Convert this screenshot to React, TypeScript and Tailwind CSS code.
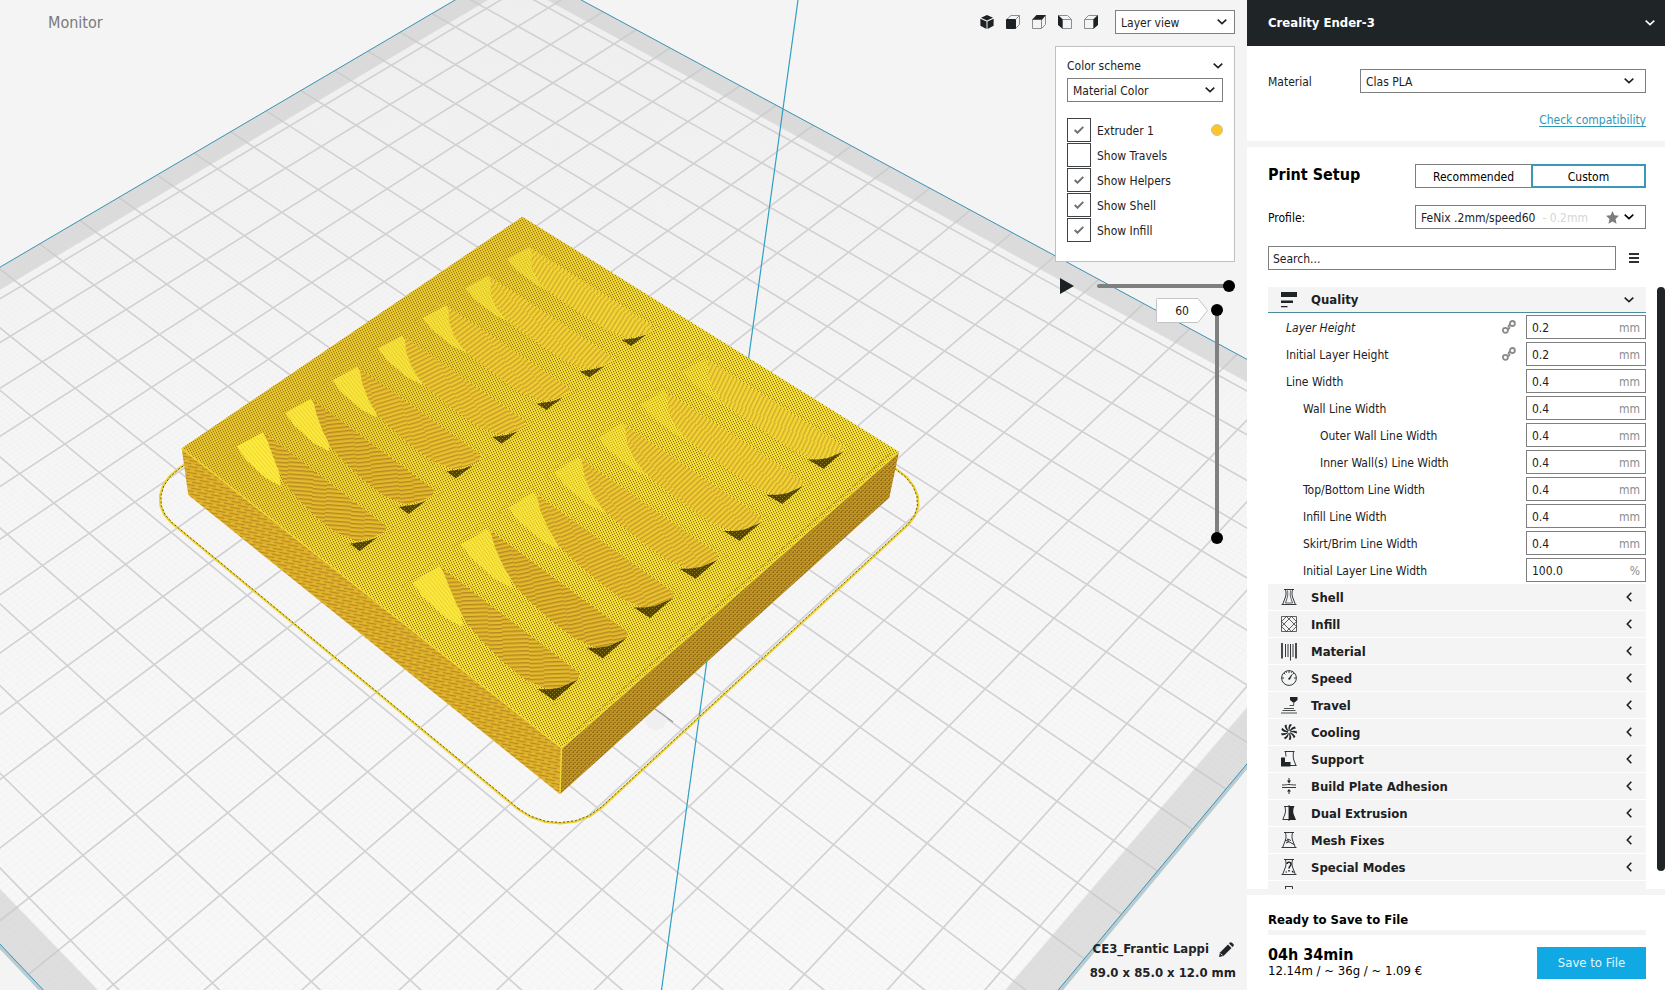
import React, { useState } from 'react';

/* ---------- projection helpers for the 3D scene ---------- */

type Matrix = readonly [number, number, number, number, number, number, number, number];

// Build plate plane, one unit = 10 mm, origin in the rear corner.
const PLATE: Matrix = [-35.03111, 25.51258, 515.4932, 17.69392, 17.063, -35.46457, -0.01075249, -0.01048606];
// Top face of the sliced model as a unit square.
const TOP: Matrix = [-360.0557, 277.0483, 522.3, 183.598, 184.9303, 216.7, -0.1070757, -0.1108472];

const PLATE_SIZE = 23.5;
const BORDER = 0.54;

function project(m: Matrix, u: number, v: number): string {
  const w = m[6] * u + m[7] * v + 1;
  const x = (m[0] * u + m[1] * v + m[2]) / w;
  const y = (m[3] * u + m[4] * v + m[5]) / w;
  return `${x.toFixed(1)} ${y.toFixed(1)}`;
}

function shape(m: Matrix, points: number[][]): string {
  return 'M' + points.map(([u, v]) => project(m, u, v)).join('L') + 'Z';
}

function gridPath(positions: number[]): string {
  return positions
    .map(
      (p) =>
        `M${project(PLATE, p, 0)}L${project(PLATE, p, PLATE_SIZE)}` +
        `M${project(PLATE, 0, p)}L${project(PLATE, PLATE_SIZE, p)}`,
    )
    .join('');
}

const majorLines = Array.from({ length: 23 }, (_, i) => 0.75 + i);
const minorLines = Array.from({ length: 234 }, (_, i) => 0.05 + i * 0.1);

const rect = (a: number, b: number) => [
  [a, a],
  [b, a],
  [b, b],
  [a, b],
];

function skirtPoints(grow: number): number[][] {
  const [u0, u1, v0, v1, r] = [6.85 - grow, 16.6 + grow, 6.7 - grow, 16.79 + grow, 0.9];
  const corners = [
    [u1 - r, v1 - r, 0],
    [u0 + r, v1 - r, 90],
    [u0 + r, v0 + r, 180],
    [u1 - r, v0 + r, 270],
  ];
  return corners.flatMap(([cu, cv, start]) =>
    [0, 15, 30, 45, 60, 75, 90].map((step) => {
      const angle = ((start + step) * Math.PI) / 180;
      return [cu + r * Math.cos(angle), cv + r * Math.sin(angle)];
    }),
  );
}

interface Slot {
  id: string;
  angle: number;
  wall: string;
  stripe: string;
  glow: number;
  outer: string;
  facet: string;
  body: string;
  dark: string;
}

const WALLS = ['#f3d835', '#f2d434', '#f0cf32', '#edca30', '#e9c22e', '#e4ba2c', '#e4bb2c'];
const STRIPES = ['#d3ab2b', '#d0a72a', '#cca129', '#c79b27', '#c09324', '#b68921', '#b68921'];

const slots: Slot[] = [0, 1].flatMap((column) =>
  Array.from({ length: 7 }, (_, i) => {
    const k = i / 6;
    const far = 1 - k;
    const p0 = 0.062 + i * 0.1318;
    const q0 = column === 0 ? 0.073 : 0.56;
    const at = ([s, t]: number[]) => [p0 + 0.083 * t, q0 + 0.363 * s];
    return {
      id: `slot-${column}-${i}`,
      angle: -58 + 62 * k - column * 6,
      wall: WALLS[i],
      stripe: STRIPES[i],
      glow: column === 0 ? 0.6 + 0.4 * k : 0.3 + 0.6 * k,
      outer: shape(TOP, [[-0.02, -0.05], [1.02, -0.05], [1.02, 1.05], [-0.02, 1.05]].map(at)),
      facet: shape(TOP, [[0.02, 0.04], [0, 0.8], [0.1, 0.93], [0.28, 1], [0.38, 0.92], [0.26, 0.5], [0.12, 0.2]].map(at)),
      body: shape(
        TOP,
        [
          [0.04, 0.03],
          [0.98, 0.04],
          [1, 0.2],
          [0.98, 0.55],
          [0.94, 0.84],
          [0.82, 1],
          [0.66, 0.99 + 0.01 * far],
          [0.5 - 0.08 * far, 0.9 + 0.08 * far],
          [0.38 - 0.08 * far, 0.78 + 0.14 * far],
          [0.26 - 0.05 * far, 0.56 + 0.2 * far],
          [0.13, 0.26 + 0.25 * far],
        ].map(at),
      ),
      dark:
        column === 0
          ? shape(TOP, [[0.93, 1], [0.95, 0.86], [0.975, 0.7], [1, 0.42], [1, 1]].map(at))
          : shape(TOP, [[0.9, 1], [0.94, 0.82], [0.97, 0.62], [1, 0.18], [1, 0.97]].map(at)),
    };
  }),
);

function Scene() {
  return (
    <svg
      className="absolute inset-0 size-full"
      viewBox="0 0 1247 990"
      preserveAspectRatio="xMinYMin slice"
      role="img"
      aria-label="Sliced model on the build plate"
    >
      <defs>
        <linearGradient id="plate" x1="0" y1="0" x2="0" y2="1">
          <stop offset="0" stopColor="#efefef" />
          <stop offset="0.3" stopColor="#f6f6f6" />
          <stop offset="1" stopColor="#fafafa" />
        </linearGradient>
        <pattern id="top" width="5" height="5" patternUnits="userSpaceOnUse">
          <rect width="5" height="5" fill="#f7e132" />
          <path
            d="M0 1h1v1H0zM1 3h1v1H1zM2 0h1v1H2zM3 2h1v1H3zM4 4h1v1H4z"
            fill="#e4c42d"
            shapeRendering="crispEdges"
          />
          <path
            d="M0 0h1v1H0zM1 2h1v1H1zM2 4h1v1H2zM3 1h1v1H3zM4 3h1v1H4z"
            fill="#85701c"
            shapeRendering="crispEdges"
          />
        </pattern>
        <pattern id="bright" width="4" height="3" patternUnits="userSpaceOnUse" patternTransform="rotate(50)">
          <rect width="4" height="3" fill="#ffec3c" />
          <path d="M0 0h4v1H0z" fill="#ecd636" />
        </pattern>
        <pattern id="left" width="14" height="6" patternUnits="userSpaceOnUse" patternTransform="rotate(10)">
          <rect width="14" height="6" fill="#dcae2a" />
          <path d="M0 0h10v1H0zM7 3h7v1H7zM0 3h3v1H0z" fill="#b78a20" />
          <path d="M10 1h4v1H10zM3 4h4v1H3z" fill="#e6bc2e" />
        </pattern>
        <pattern id="right" width="4" height="4" patternUnits="userSpaceOnUse">
          <rect width="4" height="4" fill="#c0941f" />
          <path d="M0 0h2v1H0zM2 2h2v1H2zM1 3h1v1H1z" fill="#967019" shapeRendering="crispEdges" />
        </pattern>
        <pattern id="shadow" width="4" height="4" patternUnits="userSpaceOnUse">
          <rect width="4" height="4" fill="#51450f" />
          <path d="M0 0h1v1H0zM2 2h1v1H2z" fill="#8f7a1d" />
        </pattern>
        <linearGradient id="tint" gradientUnits="userSpaceOnUse" x1="250" y1="370" x2="420" y2="560">
          <stop offset="0" stopColor="#c48f1c" stopOpacity="0.38" />
          <stop offset="1" stopColor="#c48f1c" stopOpacity="0" />
        </linearGradient>
        {slots.map((s) => (
          <pattern
            key={s.id}
            id={s.id}
            width="40"
            height="4"
            patternUnits="userSpaceOnUse"
            patternTransform={`rotate(${s.angle.toFixed(0)})`}
          >
            <rect width="40" height="4" fill={s.wall} />
            <path d="M0 0h26v1.500H0zM26 1h14v1.500H26z" fill={s.stripe} />
          </pattern>
        ))}
      </defs>

      {/* build plate */}
      <path d={shape(PLATE, rect(0, PLATE_SIZE + 0.05))} fill="#b9ccd1" />
      <path d={shape(PLATE, rect(0, PLATE_SIZE))} fill="url(#plate)" />
      <path d={gridPath(minorLines)} stroke="#ececee" strokeOpacity="0.55" strokeWidth="0.7" fill="none" />
      <path d={gridPath(majorLines)} stroke="#d2d2d5" strokeWidth="1.7" fill="none" />
      <path
        d={shape(PLATE, rect(0, PLATE_SIZE)) + shape(PLATE, rect(BORDER, PLATE_SIZE - BORDER))}
        fill="#c9c9c9"
        fillOpacity="0.56"
        fillRule="evenodd"
      />
      <path d={shape(PLATE, rect(0, PLATE_SIZE))} fill="none" stroke="#3a93b5" strokeWidth="1" />
      <path d="M798 0L661.500 990" stroke="#2f9fc4" strokeWidth="1.2" />

      {/* origin marker */}
      <circle cx="656" cy="719" r="11" fill="#efeff1" />
      <path d="M655 709l18 13" stroke="#9a9a9e" strokeWidth="1.3" />

      {/* skirt */}
      <path d={shape(PLATE, skirtPoints(0.01))} fill="none" stroke="#ecd23a" strokeWidth="2.4" />
      <path d={shape(PLATE, skirtPoints(0))} fill="none" stroke="#5f4d10" strokeWidth="0.9" strokeDasharray="2 2" />

      {/* model */}
      <path d="M181.700 448.300L561.700 748.300L560 794.300L188.300 495Z" fill="url(#left)" />
      <path d="M899 451.700L561.700 748.300L560 794.300L889.300 497.700Z" fill="url(#right)" />
      <path d={shape(TOP, rect(0, 1))} fill="url(#top)" />
      <path d={shape(TOP, rect(0, 1))} fill="url(#tint)" />
      <path d="M181.700 448.300L561.700 748.300L899 451.700" fill="none" stroke="#f0da38" strokeWidth="1.2" />
      <path d="M567 738L892 452" fill="none" stroke="#c49c25" strokeWidth="1" />
      <path d="M561.500 748L560 794" stroke="#f0d636" strokeWidth="1.5" />
      {slots.map((s) => (
        <g key={s.id}>
          <path d={s.outer} fill="none" stroke="#caa52a" strokeOpacity="0.5" strokeDasharray="2 1" strokeWidth="1" />
          <path d={s.facet} fill="url(#bright)" fillOpacity={s.glow} />
          <path d={s.body} fill={`url(#${s.id})`} />
          <path d={s.dark} fill="url(#shadow)" />
        </g>
      ))}
    </svg>
  );
}

/* ---------- small drawings ---------- */

function Chevron({ className = '' }: { className?: string }) {
  return (
    <svg className={`h-[6px] w-[10px] ${className}`} viewBox="0 0 10 6" fill="none" stroke="currentColor" strokeWidth="1.6" aria-hidden>
      <path d="M.7 .7L5 4.700L9.300 .7" />
    </svg>
  );
}

function ChevronLeft() {
  return (
    <svg className="h-[10px] w-[6px]" viewBox="0 0 6 10" fill="none" stroke="currentColor" strokeWidth="1.6" aria-hidden>
      <path d="M5.300 .7L1.300 5L5.300 9.300" />
    </svg>
  );
}

const VIEW_ICONS: { label: string; art: React.ReactNode }[] = [
  {
    label: '3D View',
    art: (
      <g fill="#1c2123">
        <path d="M7 0L13 2.700L7 5.500L1 2.700Z" />
        <path d="M.4 3.700L6.500 6.600V14L.4 10.800Z" />
        <path d="M13.600 3.700L7.500 6.600V14L13.600 10.800Z" />
      </g>
    ),
  },
  {
    label: 'Front View',
    art: (
      <g>
        <path d="M.5 4.500L5 .5H13.500V9.500L9.500 13.500M9.500 4.500L13.500 .5" fill="none" stroke="#8b8d8e" />
        <rect y="4" width="10" height="10" rx="1" fill="#1c2123" />
      </g>
    ),
  },
  {
    label: 'Top View',
    art: (
      <g>
        <path d="M.5 4.500V13.500H9.500V4.500M9.500 13.500L13.500 9.500V.5" fill="none" stroke="#8b8d8e" />
        <path d="M0 4.700L4.500 0H14L10 4.700Z" fill="#1c2123" />
      </g>
    ),
  },
  {
    label: 'Left View',
    art: (
      <g>
        <path d="M.5 .5H9.500L13.500 4.500V13.500H4.500M4.500 4.500H13.500" fill="none" stroke="#8b8d8e" />
        <path d="M0 0L4.700 4.200V14L0 10Z" fill="#1c2123" />
      </g>
    ),
  },
  {
    label: 'Right View',
    art: (
      <g>
        <path d="M9.500 13.500H.5V4.500L4.500 .5H13.500M.5 4.500H9.500" fill="none" stroke="#8b8d8e" />
        <path d="M14 0L9.300 4.200V14L14 10Z" fill="#1c2123" />
      </g>
    ),
  },
];

const VASE = 'M3 .5H13M4.500 .5C4.800 3 5.500 5 4.500 8L1.800 15M11.500 .5C11.200 3 10.500 5 11.500 8L14.200 15M.5 15.500H15.500';

const CATEGORY_ART: Record<string, React.ReactNode> = {
  Quality: <path d="M0 0H16V5H0ZM0 8.500H12V11H0ZM0 14H6.500V15.200H0Z" fill="#1f2426" stroke="none" />,
  Shell: (
    <g>
      <path d={VASE} />
      <path d="M6.500 1.500C6.800 4 7 6 6.300 8.500L4.500 14H11.500L9.700 8.500C9 6 9.200 4 9.500 1.500" strokeWidth=".7" />
    </g>
  ),
  Infill: (
    <path d="M.5 .5H15.500V15.500H.5ZM.5 5.500L5.500 .5M.5 10.500L10.500 .5M5.500 15.500L15.500 5.500M10.500 15.500L15.500 10.500M10.500 .5L15.500 5.500M5.500 .5L15.500 10.500M.5 5.500L10.500 15.500M.5 10.500L5.500 15.500" strokeWidth=".7" />
  ),
  Material: (
    <g>
      <path d="M1 0V15.500M15 0V15.500" strokeWidth="1.6" />
      <path d="M4.500 1V14M7 1V14M9.500 1V17.500M12 1V14" strokeWidth=".9" />
    </g>
  ),
  Speed: (
    <g>
      <circle cx="8" cy="8" r="7.400" />
      <path d="M8 1V3M3 3L4.300 4.300M13 3L11.700 4.300M1 8H3M13 8H15M5 1.500L5.500 2.800M11 1.500L10.500 2.800" strokeWidth=".9" />
      <path d="M7.300 9L11 4.500L8.700 9.500Z" fill="#1f2426" strokeWidth=".6" />
    </g>
  ),
  Travel: (
    <g>
      <path d="M9 0H16.500V3L13.500 5.500H12L9 3Z" fill="#1f2426" stroke="none" />
      <path d="M12.700 5.500V8.500H8.500M3 11.500H13M1.500 13.500H14.500M0 16H16" strokeWidth=".8" />
    </g>
  ),
  Cooling: (
    <g fill="#1f2426" stroke="none">
      {[0, 40, 80, 120, 160, 200, 240, 280, 320].map((a) => (
        <path key={a} d="M8 7C7 4.500 7.300 2 9 0L11 .8C9.300 2.500 8.500 4.500 8.600 7Z" transform={`rotate(${a} 8 8)`} />
      ))}
    </g>
  ),
  Support: (
    <g>
      <path d="M3.500 .5H13.500M4.500 .5L5 5.500M12.500 .5C12.200 4 12 6 12.800 9L15 14.500M9 14.500H15.500" strokeWidth=".9" />
      <path d="M0 6.500H4V11H9.500V15.500H0Z" fill="#1f2426" stroke="none" />
    </g>
  ),
  'Build Plate Adhesion': (
    <g>
      <path d="M1 7C5 7 6 6.500 8 6.500S11 7 15 7M1 9.500H15" strokeWidth=".9" />
      <path d="M8 0V4M8 12V16" strokeWidth="1" />
      <path d="M6 2.500H10L8 5.500ZM6 13.500H10L8 11Z" fill="#1f2426" stroke="none" />
    </g>
  ),
  'Dual Extrusion': (
    <g>
      <path d="M3 1.500H8M4 1.500C4.300 4 5 6 4 9L1.800 14.500H8M8 0V16" strokeWidth=".9" />
      <path d="M8 1H13.500L13 2C12 5 12 7 12.800 9.500L15 15H8Z" fill="#1f2426" stroke="none" />
    </g>
  ),
  'Mesh Fixes': (
    <g>
      <path d={VASE} />
      <path d="M4 8L7.500 9.500L6.500 7L10 8.500M5 11L8 9.800L13 12.500" strokeWidth=".9" />
    </g>
  ),
  'Special Modes': (
    <g>
      <path d={VASE} />
      <path d="M6 5C6 2.500 10 2.500 10 5C10 7 8 7 8 9.500M8 11V12.500" strokeWidth="1.500" />
      <path d="M4.500 13H6M11 12L12.500 13.500" strokeWidth="1.200" />
    </g>
  ),
  Experimental: <path d="M4.500 0V5L1 15.500H15L11.500 5V.5H4.500" />,
};

function CategoryIcon({ name }: { name: string }) {
  return (
    <svg className="size-4 overflow-visible" viewBox="0 0 16 16" fill="none" stroke="#1f2426" strokeWidth=".9" aria-hidden>
      {CATEGORY_ART[name]}
    </svg>
  );
}

/* ---------- controls ---------- */

interface DropdownProps {
  id: string;
  label?: string;
  value: string;
  className?: string;
  chevron?: string;
}

function Dropdown({ id, label, value, className = '', chevron = 'right-3' }: DropdownProps) {
  return (
    <div className={`relative h-6 ${className}`}>
      <select
        id={id}
        aria-label={label}
        className="size-full appearance-none border border-[#7f7f7f] bg-white pt-px pr-7 pl-[5px] text-[#1c2123] outline-none"
      >
        <option>{value}</option>
      </select>
      <Chevron className={`pointer-events-none absolute top-[9px] ${chevron}`} />
    </div>
  );
}

const OPTIONS = [
  { label: 'Extruder 1', on: true, color: true },
  { label: 'Show Travels', on: false },
  { label: 'Show Helpers', on: true },
  { label: 'Show Shell', on: true },
  { label: 'Show Infill', on: true },
];

function LayerPanel() {
  const [checked, setChecked] = useState(OPTIONS.map((o) => o.on));
  return (
    <section className="mt-3 flex w-[180px] flex-col border border-[#c0c0c0] bg-white px-[11px] pt-2 pb-[19px]">
      <button type="button" className="flex h-[23px] items-center justify-between pb-[2px]">
        <span>Color scheme</span>
        <Chevron />
      </button>
      <Dropdown id="scheme" label="Color scheme" value="Material Color" chevron="right-2" />
      <div className="mt-4 flex flex-col gap-px">
        {OPTIONS.map((o, i) => (
          <label key={o.label} className="flex h-6 items-center gap-[6px]">
            <span className="relative flex size-6 items-center justify-center">
              <input
                type="checkbox"
                checked={checked[i]}
                onChange={() => setChecked(checked.map((c, j) => (j === i ? !c : c)))}
                className="size-6 appearance-none border border-[#3f4345] bg-white"
              />
              {checked[i] && (
                <svg className="pointer-events-none absolute h-2 w-[10px]" viewBox="0 0 10 8" fill="none" stroke="#6f7375" strokeWidth="2" aria-hidden>
                  <path d="M.7 4L3.500 6.700L9.300 .9" />
                </svg>
              )}
            </span>
            <span className="pt-[2px]">{o.label}</span>
            {o.color && <span className="ml-auto size-3 rounded-full border border-[#c9c3ae] bg-[#fdc525]" />}
          </label>
        ))}
      </div>
    </section>
  );
}

const VERTICAL_THUMB =
  'pointer-events-none absolute inset-0 size-full appearance-none bg-transparent [direction:rtl] [writing-mode:vertical-lr] [&::-webkit-slider-thumb]:pointer-events-auto [&::-webkit-slider-thumb]:size-3 [&::-webkit-slider-thumb]:appearance-none [&::-webkit-slider-thumb]:rounded-full [&::-webkit-slider-thumb]:bg-black';

function LayerSliders() {
  return (
    <div className="mt-4 flex w-[180px] flex-col">
      <div className="flex h-4 items-center justify-between pr-0 pl-[5px]">
        <button type="button" aria-label="Play">
          <svg className="block h-4 w-[14px]" viewBox="0 0 14 16" fill="#1c2123" aria-hidden>
            <path d="M0 0L14 8L0 16Z" />
          </svg>
        </button>
        <input
          type="range"
          aria-label="Path"
          min={0}
          max={100}
          defaultValue={100}
          className="h-3 w-[138px] appearance-none bg-transparent [&::-webkit-slider-runnable-track]:h-1 [&::-webkit-slider-runnable-track]:rounded-full [&::-webkit-slider-runnable-track]:bg-[#7f7f7f] [&::-webkit-slider-thumb]:-mt-1 [&::-webkit-slider-thumb]:size-3 [&::-webkit-slider-thumb]:appearance-none [&::-webkit-slider-thumb]:rounded-full [&::-webkit-slider-thumb]:bg-black"
        />
      </div>
      <div className="mt-1 flex items-start justify-end gap-[3px] pr-3">
        <div className="relative h-[25px] w-[52px]">
          <svg className="absolute inset-0 size-full" viewBox="0 0 52 25" fill="#fff" stroke="#c4c4c4" aria-hidden>
            <path d="M1.500 .5H42L51.500 12.500L42 24.500H1.500Q.5 24.500 .5 23.500V1.500Q.5 .5 1.500 .5Z" />
          </svg>
          <input aria-label="Layer" defaultValue="60" className="relative size-full bg-transparent text-center outline-none" />
        </div>
        <div className="relative mt-[6px] flex h-60 w-3 justify-center py-1">
          <div className="h-full w-1 rounded-full bg-[#7f7f7f]" />
          <input type="range" aria-label="Top layer" min={1} max={60} defaultValue={60} className={VERTICAL_THUMB} />
          <input type="range" aria-label="Bottom layer" min={1} max={60} defaultValue={1} className={VERTICAL_THUMB} />
        </div>
      </div>
    </div>
  );
}

function Viewport() {
  return (
    <main className="relative flex min-w-0 flex-1 flex-col justify-between overflow-hidden bg-[#f4f4f4]">
      <Scene />
      <div className="relative flex items-start justify-between pr-3 pl-12">
        <a href="#monitor" className="pt-[11px] text-base leading-6 text-[#7a7a7a]">
          Monitor
        </a>
        <div className="flex flex-col items-end pt-[10px]">
          <div className="flex items-center gap-[17px]">
            <div className="flex gap-3">
              {VIEW_ICONS.map((icon) => (
                <button key={icon.label} type="button" aria-label={icon.label}>
                  <svg className="block size-[14px]" viewBox="0 0 14 14" aria-hidden>
                    {icon.art}
                  </svg>
                </button>
              ))}
            </div>
            <Dropdown id="view" label="View mode" value="Layer view" className="w-[120px]" chevron="right-2" />
          </div>
          <LayerPanel />
          <LayerSliders />
        </div>
      </div>
      <div className="relative flex flex-col items-end pr-[11px] pb-[5px] text-[13px] leading-6 font-bold text-[#1f2426]">
        <div className="flex items-center gap-[10px] pr-[2px]">
          <span>CE3_Frantic Lappi</span>
          <button type="button" aria-label="Rename project">
            <svg className="block size-[15px]" viewBox="0 0 15 15" fill="#1f2426" aria-hidden>
              <path d="M0 15L1 10.500L9 2.500L12.500 6L4.500 14Z" />
              <path d="M10 1.500L11 .5Q12 -.2 13 .8L14.300 2Q15.200 3 14.500 4L13.500 5Z" />
              <path d="M1.600 11.500L3.600 13.500" stroke="#f4f4f4" strokeWidth=".9" />
            </svg>
          </button>
        </div>
        <span>89.0 x 85.0 x 12.0 mm</span>
      </div>
    </main>
  );
}

/* ---------- sidebar ---------- */

interface Setting {
  label: string;
  value: string;
  unit: string;
  depth: 0 | 1 | 2;
  linked?: boolean;
  italic?: boolean;
}

const SETTINGS: Setting[] = [
  { label: 'Layer Height', value: '0.2', unit: 'mm', depth: 0, linked: true, italic: true },
  { label: 'Initial Layer Height', value: '0.2', unit: 'mm', depth: 0, linked: true },
  { label: 'Line Width', value: '0.4', unit: 'mm', depth: 0 },
  { label: 'Wall Line Width', value: '0.4', unit: 'mm', depth: 1 },
  { label: 'Outer Wall Line Width', value: '0.4', unit: 'mm', depth: 2 },
  { label: 'Inner Wall(s) Line Width', value: '0.4', unit: 'mm', depth: 2 },
  { label: 'Top/Bottom Line Width', value: '0.4', unit: 'mm', depth: 1 },
  { label: 'Infill Line Width', value: '0.4', unit: 'mm', depth: 1 },
  { label: 'Skirt/Brim Line Width', value: '0.4', unit: 'mm', depth: 1 },
  { label: 'Initial Layer Line Width', value: '100.0', unit: '%', depth: 1 },
];

const INDENT = ['pl-[18px]', 'pl-[35px]', 'pl-[52px]'];

const CATEGORIES = [
  'Shell',
  'Infill',
  'Material',
  'Speed',
  'Travel',
  'Cooling',
  'Support',
  'Build Plate Adhesion',
  'Dual Extrusion',
  'Mesh Fixes',
  'Special Modes',
];

function LinkIcon() {
  return (
    <svg className="mr-[10px] size-[14px]" viewBox="0 0 14 14" fill="none" stroke="#8a8a8a" strokeWidth="1.800" aria-hidden>
      <circle cx="3.400" cy="10.300" r="2.500" />
      <circle cx="10.400" cy="3.500" r="2.500" />
      <path d="M5.500 9.300Q8 9 7.400 6.600M6.600 7.200Q6 5 8.400 4.600" strokeWidth="1.700" />
    </svg>
  );
}

function SettingRow({ setting, index }: { setting: Setting; index: number }) {
  const id = `setting-${index}`;
  return (
    <div className={`flex h-[27px] items-center ${INDENT[setting.depth]}`}>
      <label htmlFor={id} className={`flex-1 pt-[2px] ${setting.italic ? 'italic' : ''}`}>
        {setting.label}
      </label>
      {setting.linked && <LinkIcon />}
      <div className="flex h-6 w-[120px] items-center border border-[#7f7f7f] bg-white px-[5px] pt-[2px]">
        <input id={id} defaultValue={setting.value} className="w-0 min-w-0 flex-1 bg-transparent outline-none" />
        <span className="text-[#8c8c8c]">{setting.unit}</span>
      </div>
    </div>
  );
}

function Category({ name, open = false, iconOnly = false }: { name: string; open?: boolean; iconOnly?: boolean }) {
  return (
    <button
      type="button"
      aria-label={name}
      aria-expanded={open}
      className={`flex h-[26px] w-full items-center bg-[#f4f4f4] pr-3 pl-[13px] text-[13px] font-bold ${open ? 'border-b border-[#4a8ba0]' : ''}`}
    >
      <CategoryIcon name={name} />
      {!iconOnly && (
        <>
          <span className="ml-[14px] flex-1 pt-px text-left">{name}</span>
          {open ? (
            <Chevron />
          ) : (
            <span className="mr-[2px]">
              <ChevronLeft />
            </span>
          )}
        </>
      )}
    </button>
  );
}

function Sidebar() {
  return (
    <aside className="flex w-[418px] shrink-0 flex-col bg-white">
      <button
        type="button"
        className="flex h-[46px] shrink-0 items-center justify-between bg-[#1f2426] pr-[10px] pl-[21px] text-[13px] font-bold text-white"
      >
        <span>Creality Ender-3</span>
        <Chevron />
      </button>

      <section className="flex h-[95px] shrink-0 flex-col pt-[23px] pr-[19px] pl-[21px]">
        <div className="flex items-center justify-between">
          <label htmlFor="material" className="pt-px">
            Material
          </label>
          <Dropdown id="material" value="Clas PLA" className="w-[286px]" />
        </div>
        <a href="#compatibility" className="mt-[19px] self-end text-[#2f97b7] underline underline-offset-2">
          Check compatibility
        </a>
      </section>

      <div className="h-[6px] shrink-0 bg-[#f4f4f4]" />

      <section className="flex shrink-0 flex-col gap-[17px] pt-[17px] pr-[19px] pb-[17px] pl-[21px] text-black">
        <div className="flex h-6 items-center justify-between">
          <h2 className="pb-[2px] text-base leading-5 font-bold">Print Setup</h2>
          <div className="flex w-[231px]">
            <button type="button" className="h-6 w-[116px] border border-r-0 border-[#7f7f7f] pt-px">
              Recommended
            </button>
            <button type="button" className="h-6 flex-1 border-2 border-[#3a97b8] pt-px">
              Custom
            </button>
          </div>
        </div>
        <div className="flex items-center justify-between">
          <label htmlFor="profile" className="pt-px">
            Profile:
          </label>
          <div className="relative">
            <Dropdown id="profile" value="FeNix .2mm/speed60" className="w-[231px]" />
            <span className="pointer-events-none absolute inset-y-0 right-[27px] flex items-center gap-[18px]">
              <span className="pt-px text-[#d6d6d6]">- 0.2mm</span>
              <svg className="size-[13px]" viewBox="0 0 13 13" fill="#7c7c7c" aria-hidden>
                <path d="M6.500 0L8.400 4.300L13 4.800L9.500 8L10.600 12.800L6.500 10.400L2.400 12.800L3.500 8L0 4.800L4.600 4.300Z" />
              </svg>
            </span>
          </div>
        </div>
        <div className="flex items-center">
          <input
            type="text"
            aria-label="Search settings"
            placeholder="Search..."
            className="h-6 min-w-0 flex-1 border border-[#7f7f7f] px-[4px] pt-px outline-none placeholder:text-[#1c2123]"
          />
          <button type="button" aria-label="Setting visibility" className="flex w-[30px] flex-col gap-[2px] pr-[7px] pl-[13px]">
            <span className="h-[2px] w-full bg-[#2b3032]" />
            <span className="h-[2px] w-full bg-[#2b3032]" />
            <span className="h-[2px] w-full bg-[#2b3032]" />
          </button>
        </div>
      </section>

      <section className="flex min-h-0 flex-1 pl-[21px]">
        <div className="min-w-0 flex-1 overflow-y-auto [scrollbar-width:none]">
          <Category name="Quality" open />
          <div className="pb-px">
            {SETTINGS.map((s, i) => (
              <SettingRow key={s.label} setting={s} index={i} />
            ))}
          </div>
          <div className="flex flex-col gap-px">
            {CATEGORIES.map((name) => (
              <Category key={name} name={name} />
            ))}
            <Category name="Experimental" iconOnly />
          </div>
        </div>
        <div className="w-[19px] shrink-0 pl-[11px]">
          <div className="h-[97%] rounded-full bg-[#1f2426]" />
        </div>
      </section>

      <div className="h-[6px] shrink-0 bg-[#f4f4f4]" />

      <footer className="flex shrink-0 flex-col pt-[15px] pr-[19px] pb-[11px] pl-[21px] text-black">
        <p className="text-[13px] leading-5 font-bold">Ready to Save to File</p>
        <div className="h-[5px] bg-[#f4f4f4]" />
        <div className="mt-3 flex items-end justify-between">
          <div>
            <p className="text-base leading-4 font-bold">04h 34min</p>
            <p className="text-[13px] leading-4">12.14m / ~ 36g / ~ 1.09 €</p>
          </div>
          <button type="button" className="h-8 w-[109px] bg-[#10a9e4] text-[13px] text-[#e3f6fd]">
            Save to File
          </button>
        </div>
      </footer>
    </aside>
  );
}

export default function App() {
  return (
    <div className="flex h-screen overflow-hidden font-['DejaVu_Sans_Condensed','DejaVu_Sans',sans-serif] text-[12px] leading-4 text-[#1c2123]">
      <Viewport />
      <Sidebar />
    </div>
  );
}
